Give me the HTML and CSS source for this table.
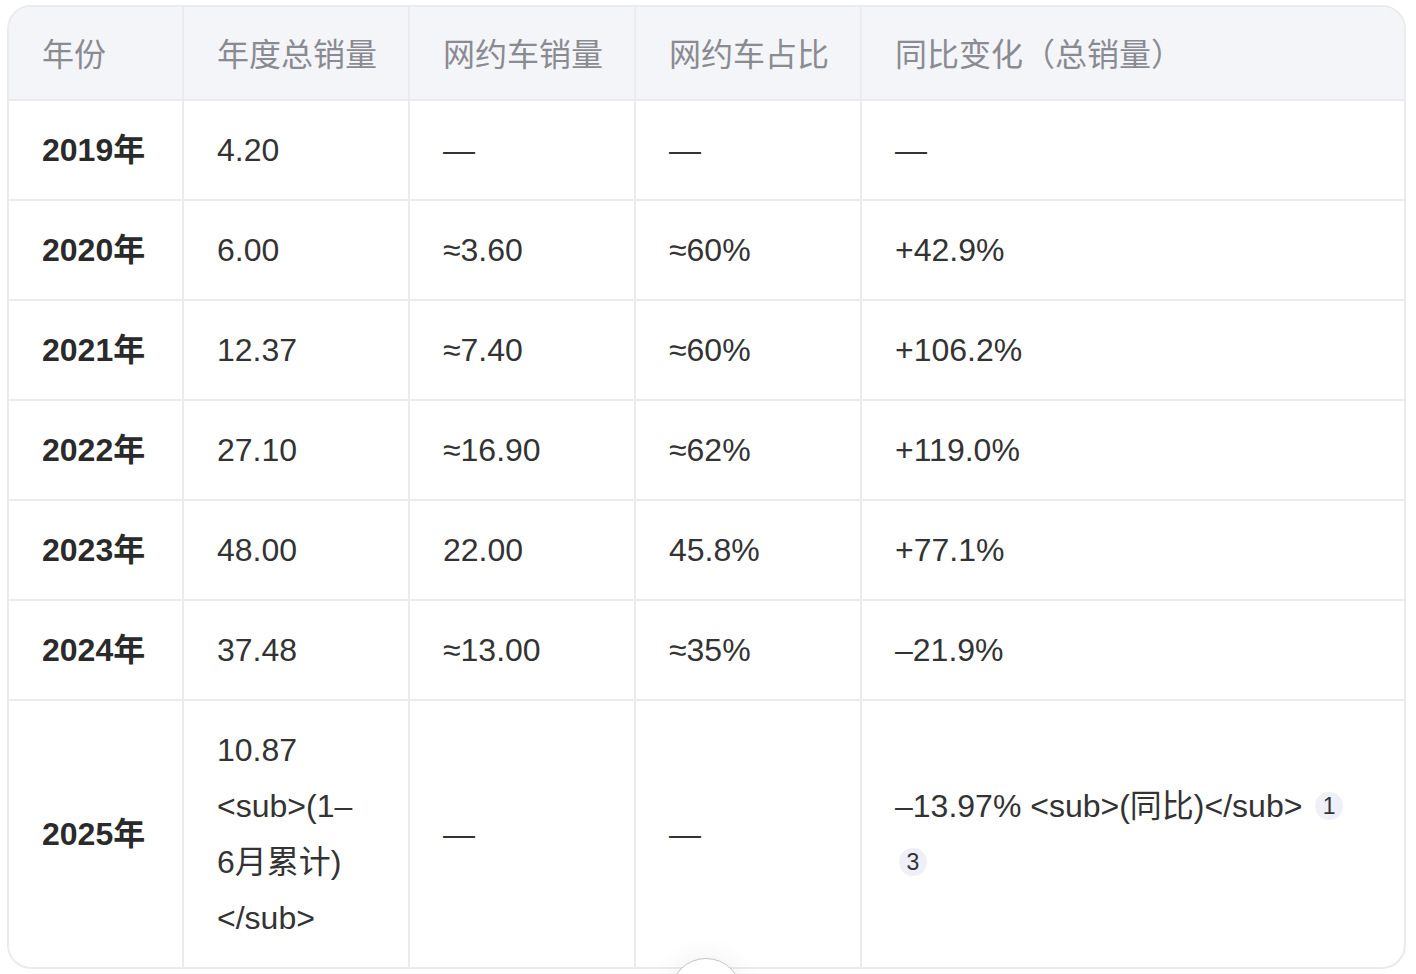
FILE: index.html
```html
<!DOCTYPE html>
<html lang="zh-CN">
<head>
<meta charset="utf-8">
<title>销量表</title>
<link rel="stylesheet" href="styles.css">
</head>
<body>
<div class="table-wrap">
  <table class="sales">
    <colgroup>
      <col class="c1"><col class="c2"><col class="c3"><col class="c4"><col class="c5">
    </colgroup>
    <thead>
      <tr><th>年份</th><th>年度总销量</th><th>网约车销量</th><th>网约车占比</th><th>同比变化（总销量）</th></tr>
    </thead>
    <tbody>
      <tr><td class="yr">2019年</td><td>4.20</td><td>—</td><td>—</td><td>—</td></tr>
      <tr><td class="yr">2020年</td><td>6.00</td><td>≈3.60</td><td>≈60%</td><td>+42.9%</td></tr>
      <tr><td class="yr">2021年</td><td>12.37</td><td>≈7.40</td><td>≈60%</td><td>+106.2%</td></tr>
      <tr><td class="yr">2022年</td><td>27.10</td><td>≈16.90</td><td>≈62%</td><td>+119.0%</td></tr>
      <tr><td class="yr">2023年</td><td>48.00</td><td>22.00</td><td>45.8%</td><td>+77.1%</td></tr>
      <tr><td class="yr">2024年</td><td>37.48</td><td>≈13.00</td><td>≈35%</td><td>–21.9%</td></tr>
      <tr class="last"><td class="yr">2025年</td><td class="note">10.87 &lt;sub&gt;(1–6月累计)<wbr>&lt;/sub&gt;</td><td>—</td><td>—</td><td>–13.97% &lt;sub&gt;(同比)&lt;/sub&gt; <span class="cite">1</span> <span class="cite">3</span></td></tr>
    </tbody>
  </table>
</div>
<div class="scroll-btn"></div>
</body>
</html>
```
FILE: styles.css
```css
html, body {
  margin: 0;
  padding: 0;
  background: #ffffff;
  height: 974px;
  overflow: hidden;
}
body {
  font-family: "Liberation Sans", "Noto Sans CJK SC", sans-serif;
  color: #333333;
  position: relative;
}
.table-wrap {
  margin: 5px 0 0 7px;
  width: 1399px;
  box-sizing: border-box;
  border: 2px solid #ebebee;
  border-radius: 24px;
  overflow: hidden;
}
.sales {
  width: 100%;
  table-layout: fixed;
  border-collapse: separate;
  border-spacing: 0;
  font-size: 32px;
  line-height: 56px;
}
.c1 { width: 175px; }
.c2, .c3, .c4 { width: 226px; }
.sales th, .sales td {
  text-align: left;
  vertical-align: middle;
  padding: 21px 33px;
  border-right: 2px solid #ebebee;
  border-bottom: 2px solid #ebebee;
}
.sales th:last-child, .sales td:last-child { border-right: none; }
.sales tr.last td { border-bottom: none; }
.sales th {
  background: #f4f5f8;
  font-weight: normal;
  color: #8a8b92;
  white-space: nowrap;
  padding-top: 20px;
  padding-bottom: 16px;
}
.sales td { color: #333333; }
.sales td.yr { font-weight: bold; color: #2a2a2a; }
.sales td.note { padding-right: 46px; }
.cite {
  display: inline-block;
  width: 28px;
  height: 28px;
  margin-left: 4px;
  border-radius: 50%;
  background: #efeff8;
  color: #333333;
  font-size: 23px;
  line-height: 28px;
  text-align: center;
  vertical-align: 3px;
}
.scroll-btn {
  position: absolute;
  left: 670px;
  top: 958px;
  width: 72px;
  height: 72px;
  box-sizing: border-box;
  border-radius: 50%;
  border: 1.5px solid #c4c4cd;
  background: #ffffff;
  box-shadow: 0 0 28px rgba(0, 0, 0, 0.07);
}
```
